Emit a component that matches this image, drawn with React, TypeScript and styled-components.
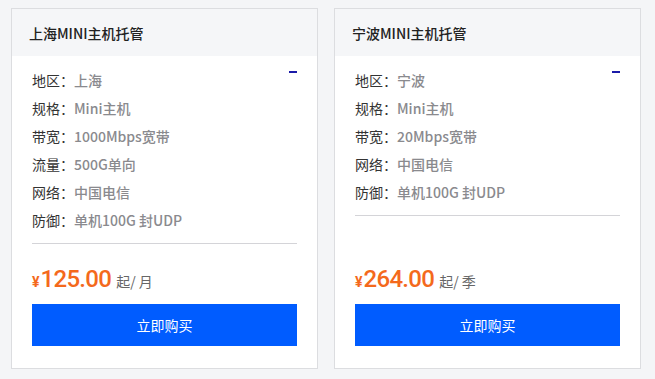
import styled, { createGlobalStyle } from 'styled-components'

const GlobalStyle = createGlobalStyle`
  body {
    margin: 0;
    background: #f4f5f7;
    font-family: "Noto Sans CJK SC", "Noto Sans", sans-serif;
  }
`

const Page = styled.div`
  display: flex;
  align-items: stretch;
  gap: 16px;
  padding: 8px 0 0 11px;
`

const Card = styled.div`
  display: flex;
  flex-direction: column;
  width: 307px;
  box-sizing: border-box;
  border: 1px solid #dcdde0;
  background: #fff;
`

const Header = styled.div`
  height: 47px;
  display: flex;
  align-items: center;
  padding-left: 17px;
  background: #f5f6f8;
  font-size: 14px;
  font-weight: 500;
  color: #222;
`

const Body = styled.div`
  position: relative;
  flex: 1;
  display: flex;
  flex-direction: column;
  padding: 10px 20px 22px;
`

const Collapse = styled.span`
  position: absolute;
  top: 15px;
  right: 20px;
  width: 8px;
  height: 2px;
  background: #1b1ba8;
`

const Row = styled.div`
  display: flex;
  height: 28px;
  align-items: center;
  font-size: 14px;
  color: #333;
`

const Value = styled.span`
  color: #8a8a8e;
  font-weight: 500;
`

const Divider = styled.div`
  margin-top: 9px;
  height: 1px;
  background: #d4d4d8;
`

const Footer = styled.div`
  margin-top: auto;
`

const Price = styled.div`
  display: flex;
  align-items: baseline;
  margin: 20px 0 7px;
  line-height: 30px;
  color: #f4691c;
`

const Yen = styled.span`
  font-family: Roboto, "Noto Sans", sans-serif;
  font-size: 14px;
  font-weight: 700;
  margin-right: 1px;
`

const Amount = styled.span`
  font-family: Roboto, "Noto Sans", sans-serif;
  font-size: 24px;
  font-weight: 500;
  letter-spacing: -0.7px;
`

const Unit = styled.span`
  margin-left: 5px;
  font-size: 14px;
  color: #666;
`

const BuyButton = styled.button`
  display: block;
  width: 100%;
  height: 42px;
  border: none;
  background: #005cff;
  color: #fff;
  font-family: "Noto Sans CJK SC", sans-serif;
  font-size: 14px;
  cursor: pointer;
`

interface IPlan {
  title: string
  specs: [string, string][]
  price: string
  unit: string
}

const plans: IPlan[] = [
  {
    title: '上海MINI主机托管',
    specs: [
      ['地区', '上海'],
      ['规格', 'Mini主机'],
      ['带宽', '1000Mbps宽带'],
      ['流量', '500G单向'],
      ['网络', '中国电信'],
      ['防御', '单机100G 封UDP'],
    ],
    price: '125.00',
    unit: '起/ 月',
  },
  {
    title: '宁波MINI主机托管',
    specs: [
      ['地区', '宁波'],
      ['规格', 'Mini主机'],
      ['带宽', '20Mbps宽带'],
      ['网络', '中国电信'],
      ['防御', '单机100G 封UDP'],
    ],
    price: '264.00',
    unit: '起/ 季',
  },
]

const PlanCard = ({ plan }: { plan: IPlan }) => (
  <Card>
    <Header>{plan.title}</Header>
    <Body>
      <Collapse />
      {plan.specs.map(([label, value]) => (
        <Row key={label}>
          {label}：<Value>{value}</Value>
        </Row>
      ))}
      <Divider />
      <Footer>
        <Price>
          <Yen>¥</Yen>
          <Amount>{plan.price}</Amount>
          <Unit>{plan.unit}</Unit>
        </Price>
        <BuyButton>立即购买</BuyButton>
      </Footer>
    </Body>
  </Card>
)

export default function App() {
  return (
    <>
      <GlobalStyle />
      <Page>
        {plans.map((p) => (
          <PlanCard key={p.title} plan={p} />
        ))}
      </Page>
    </>
  )
}
